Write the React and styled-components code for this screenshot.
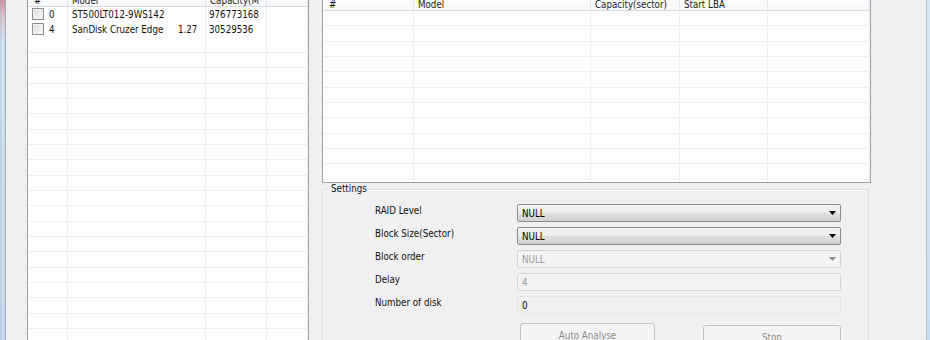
import React from 'react';
import styled, { createGlobalStyle } from 'styled-components';

const Global = createGlobalStyle`
  html, body { margin: 0; padding: 0; background: #f0f0f0; }
  body {
    font-family: "DejaVu Sans Condensed", "DejaVu Sans", sans-serif;
    font-size: 9.7px;
    color: #000;
  }
`;

const Window = styled.div`
  width: 930px;
  height: 340px;
  overflow: hidden;
  display: flex;
  background: #f0f0f0;
`;

const FrameLeft = styled.div`
  flex: none;
  width: 5px;
  border-right: 1px solid #a7b0b9;
  background:
    linear-gradient(90deg, rgba(120,160,200,0.35) 0, rgba(255,255,255,0) 3px, rgba(120,160,200,0.25) 5px),
    linear-gradient(180deg, #d8909d 0px, #e7c6cd 16px, #dce9f4 40px, #cde2f2 100%);
`;

const FrameRight = styled.div`
  flex: none;
  width: 3px;
  border-left: 1px solid #b7c6d3;
  background: linear-gradient(180deg, #d9e8f4 0%, #c9dff0 100%);
`;

const Client = styled.div`
  flex: 1;
  display: flex;
  align-items: flex-start;
  padding-left: 21px;
  gap: 13px;
`;

const ListView = styled.div`
  flex: none;
  box-sizing: border-box;
  width: ${p => p.$w}px;
  height: ${p => p.$h}px;
  margin-top: ${p => p.$top}px;
  border: 1px solid #9ca1a6;
  background: #fff;
  overflow: hidden;
`;

const HeaderRow = styled.div`
  display: grid;
  grid-template-columns: ${p => p.$cols};
  height: 16px;
  border-bottom: 1px solid #d6dbe1;
  background: linear-gradient(180deg, #ffffff 0%, #f7f8fa 100%);
`;

const HeadCell = styled.div`
  box-sizing: border-box;
  padding: 5px 0 0 ${p => p.$pad ?? 4}px;
  line-height: 11px;
  border-right: 1px solid #e4e7eb;
  white-space: nowrap;
  overflow: hidden;
  color: #1a1a1a;
`;

const Row = styled.div`
  display: grid;
  grid-template-columns: ${p => p.$cols};
  height: 15.33px;
`;

const Cell = styled.div`
  box-sizing: border-box;
  display: flex;
  align-items: center;
  gap: 5px;
  padding-left: ${p => p.$pad ?? 4}px;
  border-right: 1px solid #efefef;
  border-bottom: 1px solid ${p => (p.$filled ? '#ffffff' : '#efefef')};
  white-space: nowrap;
  overflow: hidden;
  color: #111;
`;

const Check = styled.span`
  flex: none;
  box-sizing: border-box;
  width: 12px;
  height: 12px;
  border: 1px solid #8c8e90;
  background: linear-gradient(135deg, #d4d6d8 0%, #eceded 55%, #fbfbfb 100%);
  box-shadow: inset 0 0 0 1px #f3f3f3;
`;

const ModelName = styled.span`
  display: inline-block;
  min-width: 101px;
`;

const RightColumn = styled.div`
  flex: none;
  width: 549px;
  display: flex;
  flex-direction: column;
`;

const Group = styled.fieldset`
  margin: 0 2px 0 0;
  padding: 0 0 20px 8px;
  border: 1px solid #dedede;
  border-radius: 2px;
  box-shadow: inset 1px 1px 0 #fbfbfb;
`;

const Legend = styled.legend`
  padding: 0;
  line-height: 12px;
  color: #111;
`;

const Form = styled.div`
  display: grid;
  grid-template-columns: 142px 324px;
  grid-auto-rows: 18px;
  row-gap: 5px;
  margin: 9px 0 0 44px;
`;

const Label = styled.div`
  line-height: 12px;
  padding-top: 1px;
  color: #111;
`;

const Combo = styled.div`
  box-sizing: border-box;
  height: 18px;
  display: flex;
  align-items: center;
  justify-content: space-between;
  padding: 0 4px 0 4px;
  border: 1px solid ${p => (p.$disabled ? '#d4d4d4' : '#8a8b8c')};
  border-radius: 2px;
  background: ${p =>
    p.$disabled
      ? '#f4f4f4'
      : 'linear-gradient(180deg, #f4f4f4 0%, #ececec 48%, #dfdfdf 52%, #d2d2d2 100%)'};
  color: ${p => (p.$disabled ? '#9b9b9b' : '#000')};
`;

const TextBox = styled.div`
  box-sizing: border-box;
  height: 18px;
  display: flex;
  align-items: center;
  padding-left: 4px;
  border: 1px solid ${p => (p.$faint ? '#e6e6e6' : '#d6d6d6')};
  border-radius: 2px;
  background: ${p => (p.$faint ? '#f0f0f0' : '#f2f2f2')};
  color: ${p => (p.$muted ? '#9b9b9b' : '#000')};
`;

const Buttons = styled.div`
  grid-column: 2;
  display: flex;
  justify-content: space-between;
  align-items: flex-start;
  padding-left: 3px;
  margin-top: 4px;
  height: 30px;
`;

const Button = styled.button`
  box-sizing: border-box;
  width: ${p => p.$w}px;
  height: 24px;
  margin-top: ${p => p.$dy ?? 0}px;
  border: 1px solid #c1c3c5;
  border-radius: 3px;
  background: #f4f4f4;
  color: #8a8a8a;
  font: inherit;
  padding: 0;
`;

const Arrow = ({ disabled }) => (
  <svg width="7" height="4" viewBox="0 0 7 4">
    <polygon points="0,0 7,0 3.5,4" fill={disabled ? '#8f8f8f' : '#000'} />
  </svg>
);

const leftCols = '40px 138px 61px 1fr';
const rightCols = '91px 177px 89px 88px 1fr';

const disks = [
  { id: '0', model: 'ST500LT012-9WS142', ver: '', cap: '976773168' },
  { id: '4', model: 'SanDisk Cruzer Edge', ver: '1.27', cap: '30529536' },
];

export default function App() {
  const emptyLeft = Array.from({ length: 22 });
  const emptyRight = Array.from({ length: 12 });
  return (
    <>
      <Global />
      <Window>
        <FrameLeft />
        <Client>
          <ListView $w={282} $h={400} $top={-11}>
            <HeaderRow $cols={leftCols}>
              <HeadCell $pad={6}>#</HeadCell>
              <HeadCell>Model</HeadCell>
              <HeadCell>Capacity(M</HeadCell>
              <HeadCell />
            </HeaderRow>
            {disks.map(d => (
              <Row key={d.id} $cols={leftCols}>
                <Cell $filled>
                  <Check />
                  {d.id}
                </Cell>
                <Cell $filled>
                  <ModelName>{d.model}</ModelName>
                  {d.ver}
                </Cell>
                <Cell $filled $pad={3}>{d.cap}</Cell>
                <Cell $filled />
              </Row>
            ))}
            {emptyLeft.map((_, i) => (
              <Row key={i} $cols={leftCols}>
                <Cell />
                <Cell />
                <Cell />
                <Cell />
              </Row>
            ))}
          </ListView>
          <RightColumn>
            <ListView $w={549} $h={190} $top={-7}>
              <HeaderRow $cols={rightCols}>
                <HeadCell $pad={6}>#</HeadCell>
                <HeadCell>Model</HeadCell>
                <HeadCell>Capacity(sector)</HeadCell>
                <HeadCell>Start LBA</HeadCell>
                <HeadCell />
              </HeaderRow>
              {emptyRight.map((_, i) => (
                <Row key={i} $cols={rightCols}>
                  <Cell />
                  <Cell />
                  <Cell />
                  <Cell />
                  <Cell />
                </Row>
              ))}
            </ListView>
            <Group>
              <Legend>Settings</Legend>
              <Form>
                <Label>RAID Level</Label>
                <Combo>
                  NULL
                  <Arrow />
                </Combo>
                <Label>Block Size(Sector)</Label>
                <Combo>
                  NULL
                  <Arrow />
                </Combo>
                <Label>Block order</Label>
                <Combo $disabled>
                  NULL
                  <Arrow disabled />
                </Combo>
                <Label>Delay</Label>
                <TextBox $muted>4</TextBox>
                <Label>Number of disk</Label>
                <TextBox $faint>0</TextBox>
                <Buttons>
                  <Button $w={135}>Auto Analyse</Button>
                  <Button $w={138} $dy={2}>Stop</Button>
                </Buttons>
              </Form>
            </Group>
          </RightColumn>
        </Client>
        <FrameRight />
      </Window>
    </>
  );
}
